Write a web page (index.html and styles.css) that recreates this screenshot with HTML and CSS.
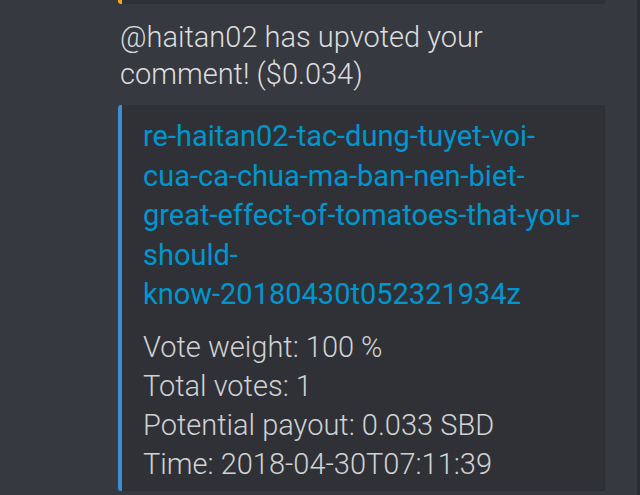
FILE: index.html
```html
<!DOCTYPE html>
<html lang="en">
<head>
  <meta charset="UTF-8">
  <meta name="viewport" content="width=device-width, initial-scale=1.0">
  <title>Upvote notification</title>
  <link rel="stylesheet" href="styles.css">
</head>
<body>
  <div class="chat">
    <div class="prev-embed"></div>
    <p class="message">@haitan02 has upvoted your comment! ($0.034)</p>
    <div class="embed">
      <a class="embed-title" href="#">re-haitan02-tac-dung-tuyet-voi-<br>cua-ca-chua-ma-ban-nen-biet-<br>great-effect-of-tomatoes-that-you-<br>should-<br>know-20180430t052321934z</a>
      <div class="fields">
        <div>Vote weight: 100 %</div>
        <div>Total votes: 1</div>
        <div>Potential payout: 0.033 SBD</div>
        <div>Time: 2018-04-30T07:11:39</div>
      </div>
    </div>
  </div>
</body>
</html>
```

FILE: styles.css
```css
body {
  margin: 0;
  background: #36393f;
  font-family: Roboto, sans-serif;
  font-weight: 300;
  color: #dcddde;
  height: 100vh;
  overflow: hidden;
}
.chat {
  padding: 0 32px 0 118px;
  border-right: 3px solid #2b2d31;
  height: 100%;
  box-sizing: border-box;
}
.prev-embed {
  height: 4px;
  background: #2f3136;
  border-left: 4px solid #faa61a;
  border-radius: 0 0 3px 3px;
}
.message {
  margin: 15px 0 12px 2px;
  font-size: 29px;
  line-height: 37px;
  width: 400px;
}
.embed {
  background: #2f3136;
  border-left: 4px solid #3b8fd6;
  border-radius: 3px;
  padding: 12px 14px 7px 21px;
  box-shadow: inset -1px -1px 0 #2c2e32;
}
.embed-title {
  display: block;
  color: #0096cf;
  font-weight: 400;
  text-decoration: none;
  font-size: 29px;
  line-height: 39.5px;
}
.fields {
  margin-top: 13px;
  font-size: 29px;
  line-height: 39px;
  color: #d0d2d4;
}
```
